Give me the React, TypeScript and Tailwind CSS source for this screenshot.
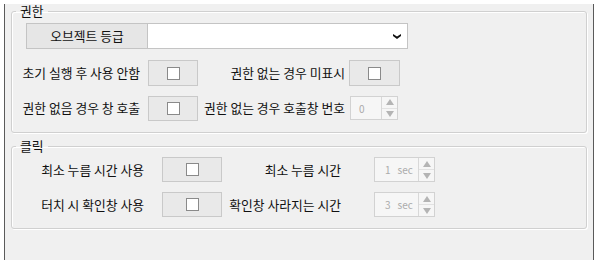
import React from 'react';

const font = { fontFamily: '"Noto Sans CJK KR", "Noto Sans", sans-serif' };

const CheckCell: React.FC<{ w: string; h: string }> = ({ w, h }) => (
  <div className={`flex items-center justify-center ${w} ${h} bg-[#e9e9e9] border border-[#c9c9c9]`}>
    <div className="w-[13px] h-[13px] bg-white border border-[#8a8a8a]"></div>
  </div>
);

const Spin: React.FC<{ value: string; unit?: string; w: string; h: string; pl: string }> = ({ value, unit, w, h, pl }) => (
  <div className={`flex ${w} ${h} bg-[#f6f6f6] border border-[#d2d2d2]`}>
    <div className={`flex-1 flex items-center gap-[7px] ${pl} text-[10px] text-[#ababab]`}>
      <span>{value}</span>
      {unit && <span>{unit}</span>}
    </div>
    <div className="flex flex-col w-[16px] border-l border-[#d8d8d8]">
      <div className="flex-1 flex items-center justify-center border-b border-[#e2e2e2]">
        <svg width="8" height="6" viewBox="0 0 8 6">
          <path d="M4 0 L8 6 L0 6 Z" fill="#b4b4b4" />
        </svg>
      </div>
      <div className="flex-1 flex items-center justify-center">
        <svg width="8" height="6" viewBox="0 0 8 6">
          <path d="M0 0 L8 0 L4 6 Z" fill="#b4b4b4" />
        </svg>
      </div>
    </div>
  </div>
);

const Group: React.FC<{ title: string; className?: string; children: React.ReactNode }> = ({ title, className, children }) => (
  <fieldset
    className={`ml-[6px] w-[576px] border border-[#d0d0d0] rounded-[3px] shadow-[inset_1px_1px_0_#ffffff,1px_1px_0_#ffffff] ${className ?? ''}`}
  >
    <legend className="ml-[4px] px-[4px] text-[12.8px] leading-[14px] text-[#111]">{title}</legend>
    {children}
  </fieldset>
);

export default function App() {
  return (
    <div className="w-[601px] h-[260px] bg-white overflow-hidden" style={font}>
      <div className="mt-[4px] ml-[4px] w-[590px] h-[256px] bg-[#f0f0f0] border-l border-r border-[#5a5a5a] text-[12.8px] text-[#111]">
        <Group title="권한" className="mt-[3px] pt-[5px] pb-[11px]">
          {/* 오브젝트 등급 */}
          <div className="flex pl-[14px]">
            <div className="flex items-center justify-center w-[122px] h-[26px] bg-[#e6e6e6] border border-[#c4c4c4]">
              오브젝트 등급
            </div>
            <div className="flex items-center justify-end w-[260px] h-[26px] bg-white border border-l-0 border-[#c4c4c4] pr-[6px]">
              <svg width="8" height="5" viewBox="0 0 8 5">
                <path d="M0 0 L4 2.5 L8 0 L8 2 L4 5 L0 2 Z" fill="#111" />
              </svg>
            </div>
          </div>

          <div className="flex items-center h-[26px] mt-[11px]">
            <div className="w-[128px] text-right whitespace-nowrap">초기 실행 후 사용 안함</div>
            <div className="ml-[8px]">
              <CheckCell w="w-[50px]" h="h-[26px]" />
            </div>
            <div className="w-[147px] text-right whitespace-nowrap">권한 없는 경우 미표시</div>
            <div className="ml-[4px]">
              <CheckCell w="w-[51px]" h="h-[26px]" />
            </div>
          </div>

          <div className="flex items-center h-[26px] mt-[9px]">
            <div className="w-[128px] text-right whitespace-nowrap">권한 없음 경우 창 호출</div>
            <div className="ml-[8px]">
              <CheckCell w="w-[50px]" h="h-[25px]" />
            </div>
            <div className="w-[147px] text-right whitespace-nowrap">권한 없는 경우 호출창 번호</div>
            <div className="ml-[5px]">
              <Spin value="0" w="w-[48px]" h="h-[24px]" pl="pl-[8px]" />
            </div>
          </div>
        </Group>

        <Group title="클릭" className="mt-[6px] pt-[4px] pb-[11px]">
          <div className="flex items-center h-[25px]">
            <div className="w-[132px] text-right whitespace-nowrap">최소 누름 시간 사용</div>
            <div className="ml-[18px]">
              <CheckCell w="w-[60px]" h="h-[25px]" />
            </div>
            <div className="w-[119px] text-right whitespace-nowrap">최소 누름 시간</div>
            <div className="ml-[33px]">
              <Spin value="1" unit="sec" w="w-[61px]" h="h-[25px]" pl="pl-[10px]" />
            </div>
          </div>

          <div className="flex items-center h-[25px] mt-[10px]">
            <div className="w-[132px] text-right whitespace-nowrap">터치 시 확인창 사용</div>
            <div className="ml-[18px]">
              <CheckCell w="w-[60px]" h="h-[25px]" />
            </div>
            <div className="w-[119px] text-right whitespace-nowrap">확인창 사라지는 시간</div>
            <div className="ml-[33px]">
              <Spin value="3" unit="sec" w="w-[61px]" h="h-[25px]" pl="pl-[10px]" />
            </div>
          </div>
        </Group>
      </div>
    </div>
  );
}
